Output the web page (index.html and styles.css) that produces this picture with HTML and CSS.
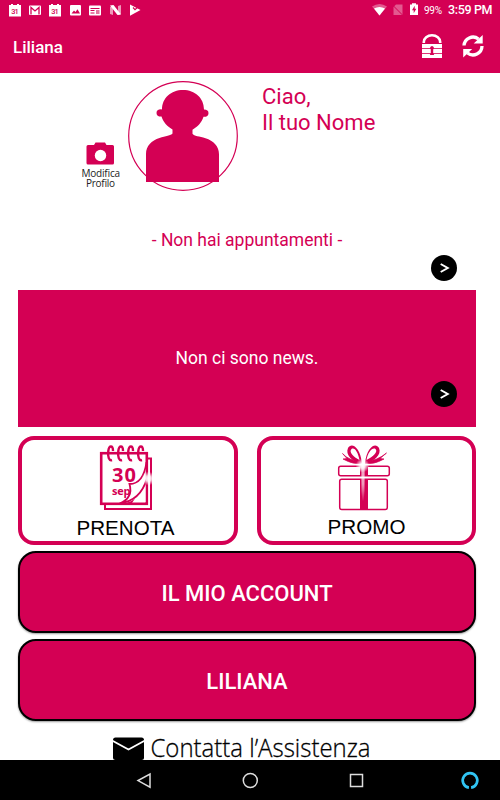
FILE: index.html
```html
<!DOCTYPE html>
<html lang="it">
<head>
    <meta charset="UTF-8">
    <meta name="viewport" content="width=device-width, initial-scale=1.0">
    <title>Liliana</title>
    <link rel="stylesheet" href="styles.css">
</head>
<body>

    <!-- Barra di stato -->
    <div class="status">
        <svg width="150" height="20" viewBox="0 0 150 20" fill="#fff">
            <path d="M9 5h2v-1h2v1h4v-1h2v1h2v11.500h-12z"/>
            <text class="day" x="11.200" y="14" textLength="7.600">31</text>
            <rect x="29" y="5.500" width="12" height="9.500" rx="1"/>
            <path d="M31 14.500V7.500l4 3.500 4-3.500v7" fill="none" stroke="#d40054" stroke-width="1.300"/>
            <path d="M49 5h2v-1h2v1h4v-1h2v1h2v11.500h-12z"/>
            <text class="day" x="51.200" y="14" textLength="7.600">31</text>
            <rect x="70" y="5" width="11" height="10.500" rx="1"/>
            <path d="M71.500 13.500l2.500-3 1.500 1.500 2-2.700 2.500 4.200z" fill="#d40054"/>
            <rect x="89" y="5.500" width="12" height="10" rx="1"/>
            <path d="M90.500 8.500h9M90.500 10.500h4M90.500 13h4" stroke="#d40054" stroke-width="1"/>
            <rect x="96" y="10" width="3.500" height="4" fill="#e2769f"/>
            <path d="M110 7l3-1v9l-3-1zM118 6l3-1v9l-3 1z" opacity=".6"/>
            <path d="M110 5.500l3.500-.5 7.500 9.500-3.500.5z"/>
            <path d="M130 4.500l10.500 5.500-10.500 5.800z"/>
            <path d="M133 7.500l2 2.200 5-4.700" fill="none" stroke="#d40054" stroke-width="1.200"/>
        </svg>
        <svg width="130" height="20" viewBox="370 0 130 20" fill="#fff">
            <path d="M372 6.500q7.500-5 15 0L379.500 15.500z" opacity=".35"/>
            <path d="M374 8.500q5.500-3 11 0L379.500 15.500z"/>
            <path d="M396 4.500h6.500v10.500h-9v-8z" opacity=".35"/>
            <path d="M392.500 5l10.500 10.500" stroke="#d40054"/>
            <path d="M410 4.500h2v-1.200h4v1.200h2v10.500h-8z"/>
            <path d="M414.700 5.700l-2.700 4.500h1.700v3l2.600-4.500h-1.600z" fill="#d40054"/>
            <text class="battery" x="424" y="13.700" textLength="18">99%</text>
            <text class="clock" x="448" y="14.200" textLength="44.500">3:59 PM</text>
        </svg>
    </div>

    <header class="toolbar">
        <h1>Liliana</h1>
        <svg width="64" height="30" viewBox="421 32 64 30">
            <path d="M423.800 43v-1a8.200 6.700 0 0 1 16.400 0v1" fill="none" stroke="#fff" stroke-width="2.600"/>
            <rect x="422" y="44" width="20" height="14" fill="#fff"/>
            <path d="M422 48.500h20M422 53.500h20" stroke="#d40054" stroke-width=".8"/>
            <path d="M432 46a2 2 0 0 1 1.200 3.500v3.500l1 2h-4.400l1-2v-3.500a2 2 0 0 1 1.200-3.500z" fill="#d40054"/>
            <path d="M464 45.500a9 9 0 0 1 14.500-6.500M482 46a9 9 0 0 1-14.500 7" fill="none" stroke="#fff" stroke-width="3.300"/>
            <path d="M482.700 35v8.500h-9zM463.200 57.500v-8.500h9z" fill="#fff"/>
        </svg>
    </header>

    <main>
        <!-- Profilo -->
        <section class="profile">
            <svg class="edit" width="44" height="50" viewBox="79 140 44 50">
                <path d="M88 145h6l1.500-2.500h9.500l1.500 2.500h6q1.500 0 1.500 1.500v16.500q0 1.500-1.500 1.500h-24.500q-1.500 0-1.500-1.500v-16.500q0-1.500 1.500-1.500z" fill="#d40054"/>
                <circle cx="100.500" cy="155.500" r="5.700" fill="#fff"/>
                <text x="81.500" y="177" textLength="38.500">Modifica</text>
                <text x="86" y="186.500" textLength="29">Profilo</text>
            </svg>
            <svg width="112" height="112" viewBox="127 81 112 112">
                <circle cx="183" cy="136" r="54.300" fill="#fff" stroke="#d40054" stroke-width="1.200"/>
                <path d="M162 109.500C162 98 171 90 183 90s21 8 21 19.500q4.500 0 4.500 3.700t-5 3.600c-2 6-6 10-11 13v4c1.500 2.500 7 2.500 13 4.500 8 2.500 13.500 8 13.500 16V182h-73v-28c0-8 5.500-13.500 13.500-16 6-2 11.500-2.500 13-4.500v-4c-5-3-9-7-11-13q-5 .1-5-3.600t4.500-3.700z" fill="#d40054"/>
            </svg>
            <p>Ciao,<br>Il tuo Nome</p>
        </section>

        <section class="appointments">
            <p>- Non hai appuntamenti -</p>
            <a class="arrow" href="#"><svg width="26" height="26"><path d="M9.700 9l7 4-7 4"/></svg></a>
        </section>

        <section class="news">
            <p>Non ci sono news.</p>
            <a class="arrow" href="#"><svg width="26" height="26"><path d="M9.700 9l7 4-7 4"/></svg></a>
        </section>

        <div class="tiles">
            <a class="tile" href="#">
                <svg width="212" height="101" viewBox="22 440 212 101">
                    <defs>
                        <radialGradient id="glow">
                            <stop offset="0" stop-color="#fff"/>
                            <stop offset=".4" stop-color="#fff" stop-opacity=".85"/>
                            <stop offset="1" stop-color="#fff" stop-opacity="0"/>
                        </radialGradient>
                    </defs>
                    <path d="M105 505v4h46v-50.500h-4" fill="none" stroke="#d40054" stroke-width="2"/>
                    <rect x="101.200" y="453.200" width="45.600" height="50.600" fill="#fff" stroke="#d40054" stroke-width="2.600"/>
                    <text class="num" x="112" y="481.800" textLength="24">30</text>
                    <text class="month" x="112" y="495" textLength="18.500">sep</text>
                    <path d="M145.500 463q-2 18-13 21.500 2 15-10 17.500h23z" fill="#fff"/>
                    <path d="M146.500 462q-3 22-17 22 4 14-10 19.500 21-3 27-24" fill="none" stroke="#d40054" stroke-width="1.800"/>
                    <path d="M118 504.500q11-1 17-6l-4 6z" fill="#d40054"/>
                    <g fill="none" stroke="#d40054" stroke-width="2.400">
                        <path id="ring" d="M113 451c0-6-4-6-4.700 0s.7 10 3.700 9"/>
                        <use href="#ring" x="10"/>
                        <use href="#ring" x="20"/>
                        <use href="#ring" x="30"/>
                    </g>
                    <circle cx="148.500" cy="478.500" r="7" fill="url(#glow)"/>
                    <text class="label" x="76.500" y="535" textLength="98" lengthAdjust="spacingAndGlyphs">PRENOTA</text>
                </svg>
            </a>
            <a class="tile" href="#">
                <svg width="211" height="101" viewBox="261 440 211 101">
                    <g fill="none" stroke="#d40054" stroke-width="1.500">
                        <rect x="338.700" y="466.200" width="50.600" height="9.600" rx="2"/>
                        <rect x="339.700" y="479.200" width="47.600" height="30.300" rx="2"/>
                    </g>
                    <path d="M360 466h8v10h-8zM360 479h8v30.500h-8z" fill="#d40054"/>
                    <path d="M361 464c-9-3-16-9-13-16 3-6 12-2 14 15zm-1.500-4c-1.500-8-5-13-8-11-3 3 2 8 8 11zM365 464c9-3 17-9 14-16-3-6-12-2-14 15zm1.500-4c1.500-8 6-13 9-11 3 3-3 8-9 11z" fill="#d40054" fill-rule="evenodd"/>
                    <path d="M361 463q-7 2-18-4l4-.5-4.500-5q6 7 18.500 8zM366 463q7 2 18-4l-4-.5 6.500-5.500q-9 7.500-20.500 8.500z" fill="#d40054" stroke="#d40054" stroke-width=".7"/>
                    <ellipse cx="363" cy="475" rx="2.500" ry="27" fill="url(#glow)" opacity=".7"/>
                    <circle cx="362.500" cy="465.500" r="7" fill="url(#glow)"/>
                    <text class="label" x="327.500" y="534" textLength="78" lengthAdjust="spacingAndGlyphs">PROMO</text>
                </svg>
            </a>
        </div>

        <a class="button" href="#">IL MIO ACCOUNT</a>
        <a class="button" href="#">LILIANA</a>

        <a class="contact" href="#">
            <svg width="262" height="28" viewBox="112 732 262 28">
                <rect x="113" y="737.500" width="31" height="22.500" rx="2.500"/>
                <path d="M112 740.500l16.500 9 16.500-9" fill="none" stroke="#fff" stroke-width="1.800"/>
                <text x="150.500" y="756.500" textLength="220" lengthAdjust="spacingAndGlyphs">Contatta l’Assistenza</text>
            </svg>
        </a>
    </main>

    <!-- Barra di navigazione -->
    <nav>
        <svg width="500" height="40" viewBox="0 760 500 40" fill="none" stroke="#ddd" stroke-width="1.500">
            <path d="M150 774v13.200l-12-6.600z"/>
            <circle cx="250.300" cy="780.500" r="7"/>
            <rect x="350.500" y="774.500" width="12" height="12"/>
            <path d="M468.900 787.600a7.300 7.300 0 1 1 2.200 0" stroke="#31c4f3" stroke-width="2.600"/>
        </svg>
    </nav>

</body>
</html>
```

FILE: styles.css
```css
* { box-sizing: border-box; }

body {
    margin: 0;
    width: 500px;
    height: 800px;
    overflow: hidden;
    display: flex;
    flex-direction: column;
    background-color: white;
    color: #d40054;
    font-family: Roboto, sans-serif;
}

svg { display: block; }
p { margin: 0; }
a { color: inherit; text-decoration: none; }

/* Barra di stato */
.status {
    height: 20px;
    display: flex;
    justify-content: space-between;
    background-color: #d40054;
}

.day { font-size: 7.5px; font-weight: 500; fill: #d40054; }
.battery { font-size: 10px; }
.clock { font-size: 12.5px; font-weight: 500; }

.toolbar {
    height: 53px;
    padding: 0 15px 0 13px;
    display: flex;
    justify-content: space-between;
    align-items: center;
    background-color: #d40054;
    color: white;
}

.toolbar h1 { margin: 0; font-size: 17px; font-weight: 500; }

main {
    height: 687px;
    padding: 0 24px 0 18px;
    overflow: hidden;
}

/* Profilo */
.profile {
    height: 149px;
    padding-top: 8px;
    display: flex;
}

.profile p {
    margin: 3px 0 0 23px;
    font-size: 22px;
    line-height: 26px;
}

.edit { margin: 59px 4px 0 61px; }
.edit text { font-family: "Open Sans", sans-serif; font-size: 10px; fill: #222; }

.appointments {
    height: 68px;
    padding: 7px 19px 0 0;
}

.appointments p {
    margin-left: 19px;
    font-size: 17.5px;
    line-height: 22px;
    text-align: center;
}

.appointments .arrow { margin-top: 4px; }

.arrow {
    display: block;
    width: 26px;
    height: 26px;
    margin-left: auto;
    background-color: black;
    border-radius: 50%;
}

.arrow path { fill: none; stroke: white; stroke-width: 2; }

/* News */
.news {
    height: 137px;
    padding: 57px 19px 0 0;
    background-color: #d40054;
    color: white;
}

.news p {
    margin-left: 19px;
    font-size: 17.5px;
    line-height: 22px;
    text-align: center;
}

.news .arrow { margin-top: 12px; }

.tiles {
    display: flex;
    justify-content: space-between;
    margin: 9px 0 6px;
}

.tile {
    height: 109px;
    border: 4px solid #d40054;
    border-radius: 16px;
}

.num { font: bold 20px "Open Sans", sans-serif; fill: #d40054; }
.month { font: bold 11px "Open Sans", sans-serif; fill: #d40054; }
.label { font: 20.5px "Liberation Sans", sans-serif; fill: black; }

.button {
    height: 82px;
    margin-bottom: 6px;
    display: flex;
    justify-content: center;
    align-items: center;
    background-color: #d40054;
    border: 2px solid black;
    border-radius: 18px;
    box-shadow: 0 1px 2px rgba(0, 0, 0, 0.4);
    color: white;
    font-size: 22px;
    font-weight: 500;
    padding-top: 2px;
}

.contact { display: block; padding: 5px 0 0 94px; }
.contact text { font: 300 26px "Open Sans", sans-serif; stroke: black; stroke-width: 0.3px; }

nav { height: 40px; background-color: black; }
```
